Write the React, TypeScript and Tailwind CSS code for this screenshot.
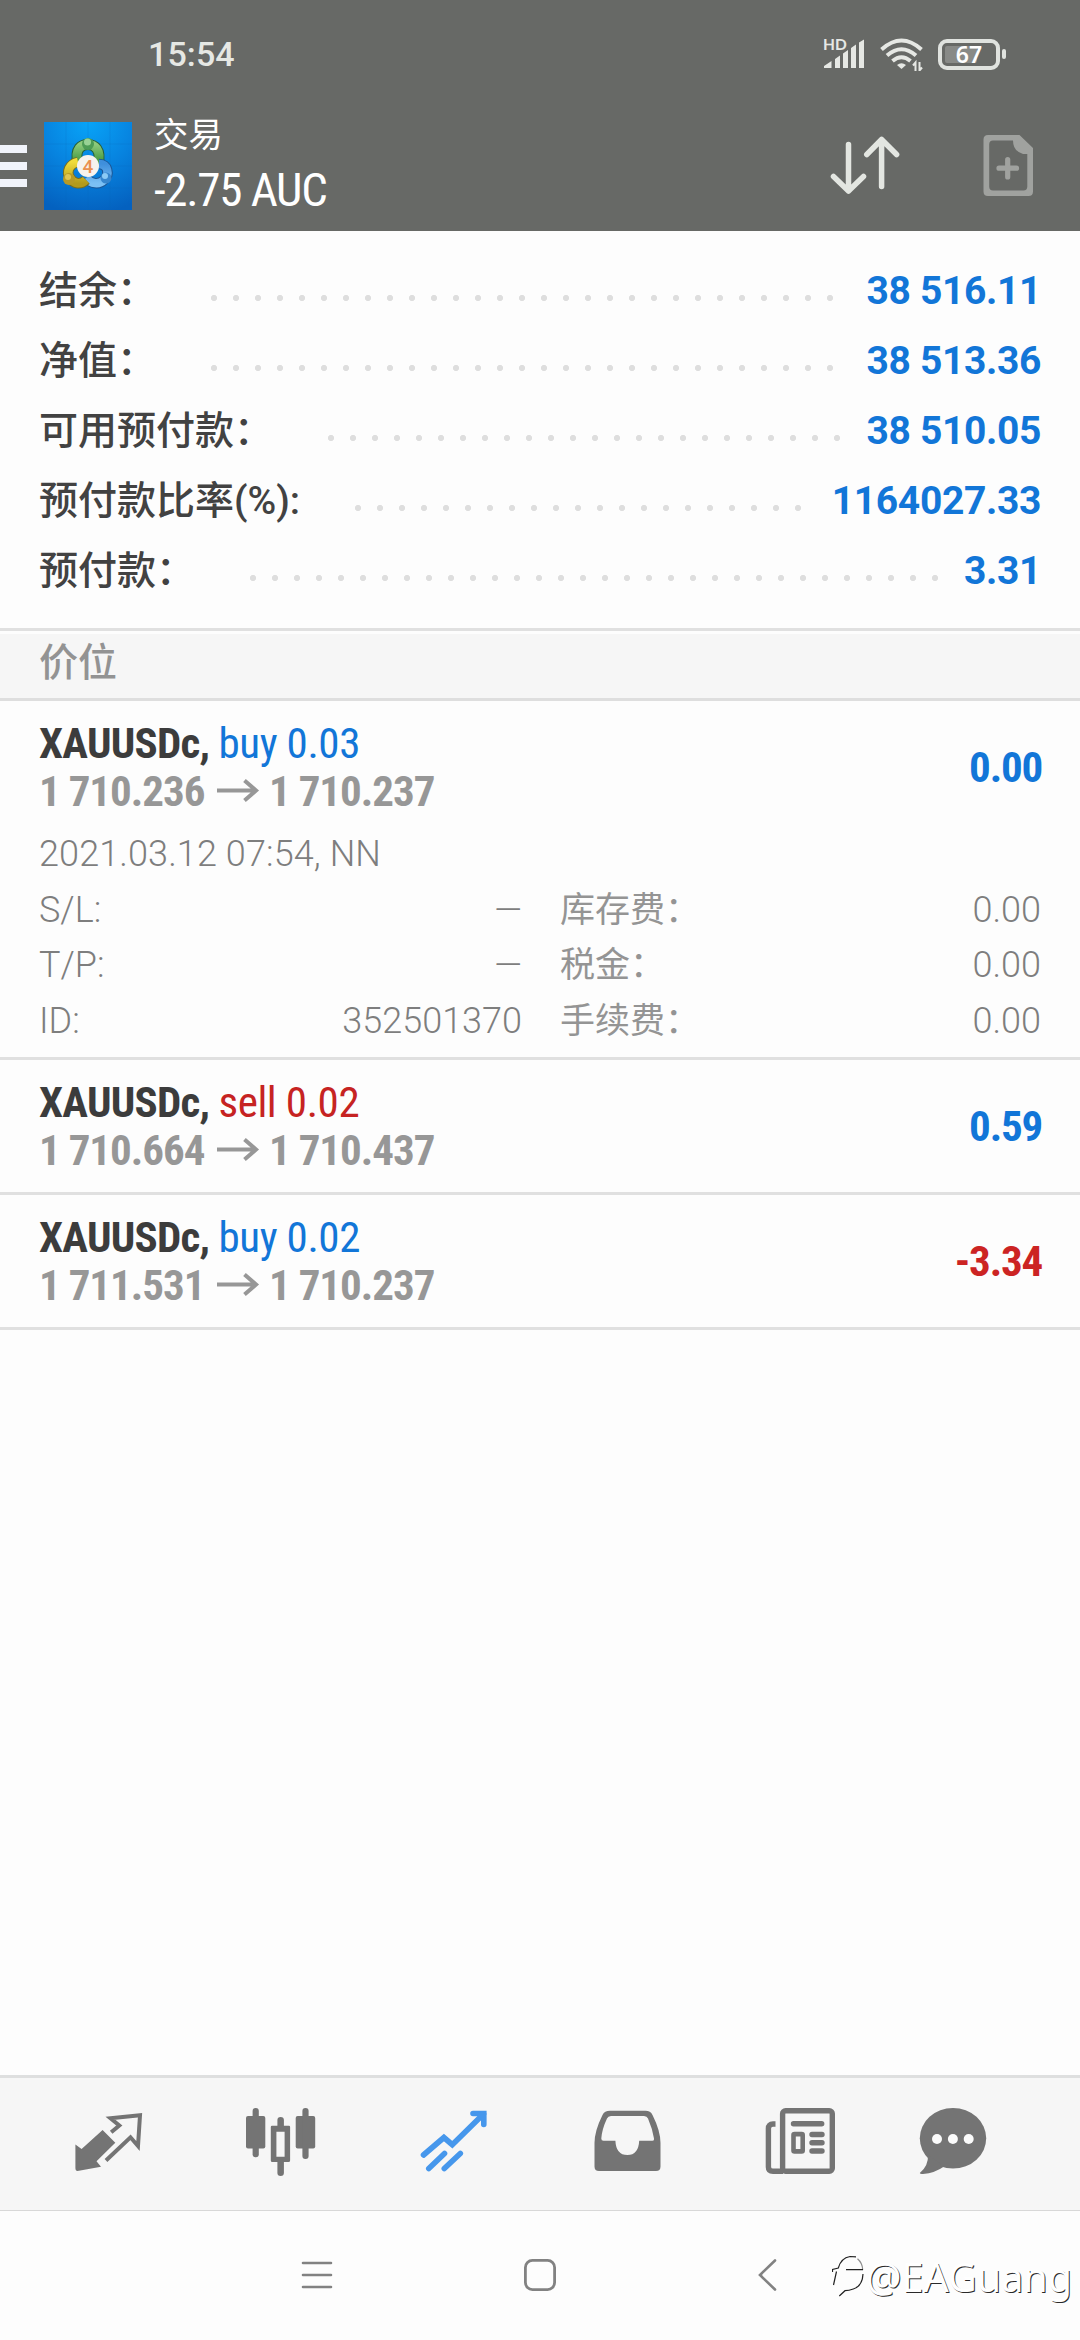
import React from 'react';

const accountRows = [
  { label: '结余：', value: '38 516.11' },
  { label: '净值：', value: '38 513.36' },
  { label: '可用预付款：', value: '38 510.05' },
  { label: '预付款比率(%):', value: '1164027.33' },
  { label: '预付款：', value: '3.31' },
];

const positions = [
  {
    id: 1, symbol: 'XAUUSDc,', side: 'buy', volume: '0.03', open: '1 710.236', current: '1 710.237', profit: '0.00',
    details: {
      date: '2021.03.12 07:54, NN',
      rows: [
        ['S/L:', '—', '库存费：', '0.00'],
        ['T/P:', '—', '税金：', '0.00'],
        ['ID:', '352501370', '手续费：', '0.00'],
      ],
    },
  },
  { id: 2, symbol: 'XAUUSDc,', side: 'sell', volume: '0.02', open: '1 710.664', current: '1 710.437', profit: '0.59' },
  { id: 3, symbol: 'XAUUSDc,', side: 'buy', volume: '0.02', open: '1 711.531', current: '1 710.237', profit: '-3.34' },
];

function StatusBar() {
  return (
    <div className="flex h-[100px] items-center pt-[8px] pl-[148px] pr-[74px] text-[#e6e8e4]">
      <span className="font-['Roboto'] text-[34px] font-medium leading-none tracking-[0.1px]">15:54</span>
      <div className="ml-auto flex items-center">
        <svg width="44" height="50" viewBox="0 -8 44 50" fill="currentColor">
          <text x="1" y="12.500" fontSize="15.500" fontFamily="Lato" fontWeight="700">HD</text>
          <path d="M2 31 V29 L9.5 24 V31 Z M13 31 V22 L18 18.5 V31 Z M21 31 V16.5 L26 13 V31 Z M29 31 V11 L34 7.5 V31 Z M37 31 V5.5 L42 2.5 V31 Z" />
        </svg>
        <svg className="ml-[14px]" width="44" height="34" viewBox="0 0 44 34" fill="none" stroke="currentColor" strokeWidth="4">
          <path d="M1.5 12.5 Q21.500 -5.500 41.500 12.500" />
          <path d="M7 18.500 Q21.500 6 36 18.500" />
          <path d="M12.500 24 Q21.500 16.500 30.500 24" />
          <path d="M17 28 Q21.500 24.500 26 28 L21.500 32 Z" fill="currentColor" stroke="none" />
          <path d="M35.500 34 V25.500 L33 28.500 M39.500 25 V33.500 L42 30.500" strokeWidth="2" />
        </svg>
        <div className="relative ml-[14px] flex h-[31px] w-[62px] items-center justify-center rounded-[9px] border-[4px] border-[#e0e3df]">
          <div className="absolute left-[3px] top-[3px] h-[17px] w-[32px] rounded-[2px] bg-[#888a87]" />
          <span className="relative font-['Noto_Sans'] text-[23px] font-semibold leading-none text-white">67</span>
        </div>
        <div className="ml-[2px] h-[10px] w-[4px] rounded-[2px] bg-[#e0e3df]" />
      </div>
    </div>
  );
}

function AppLogo() {
  return (
    <svg className="ml-[17px]" width="88" height="88" viewBox="0 0 88 88">
      <defs>
        <radialGradient id="logoBg" cx="0.5" cy="0" r="1.05">
          <stop offset="0" stopColor="#08a4f8" />
          <stop offset="0.5" stopColor="#0783df" />
          <stop offset="1" stopColor="#0461bf" />
        </radialGradient>
        <linearGradient id="green" x1="0" y1="0" x2="0" y2="1">
          <stop offset="0" stopColor="#8cc97a" />
          <stop offset="1" stopColor="#358f35" />
        </linearGradient>
        <linearGradient id="gold" x1="0" y1="0" x2="0" y2="1">
          <stop offset="0" stopColor="#f0dc3a" />
          <stop offset="1" stopColor="#b39a1c" />
        </linearGradient>
        <linearGradient id="sky" x1="0" y1="0" x2="0" y2="1">
          <stop offset="0" stopColor="#3f8fdc" />
          <stop offset="1" stopColor="#7cc0f4" />
        </linearGradient>
      </defs>
      <rect width="88" height="88" fill="url(#logoBg)" />
      <path d="M0 22H88M0 44H88M0 66H88M22 0V88M44 0V88M66 0V88" stroke="#0a62b8" strokeOpacity="0.2" />
      <path d="M34 42 C30 26 38 22.500 44 22.500 C50 22.500 58 27 54 43" fill="none" stroke="#285f35" strokeWidth="11" />
      <path d="M34 42 C30 26 38 22.500 44 22.500 C50 22.500 58 27 54 43" fill="none" stroke="url(#green)" strokeWidth="9" />
      <path d="M55 42 C64 42 66 52 60 58 C55 63 47 62 42 56" fill="none" stroke="#1b5695" strokeWidth="10.500" />
      <path d="M55 42 C64 42 66 52 60 58 C55 63 47 62 42 56" fill="none" stroke="url(#sky)" strokeWidth="8.500" />
      <path d="M34 40 C25 42 22 50 26 56 C30 62.500 37 63 42 58" fill="none" stroke="#776d20" strokeWidth="10.500" />
      <path d="M34 40 C25 42 22 50 26 56 C30 62.500 37 63 42 58" fill="none" stroke="url(#gold)" strokeWidth="8.500" />
      <circle cx="44" cy="22" r="6" fill="#4d9c55" />
      <circle cx="43.500" cy="20" r="3.500" fill="#98d294" />
      <circle cx="25" cy="57" r="6" fill="#b79a25" />
      <circle cx="24" cy="55" r="3" fill="#dfc552" />
      <circle cx="62" cy="56" r="5.500" fill="#3686ce" />
      <circle cx="61" cy="54" r="3" fill="#8bcaf5" />
      <circle cx="44" cy="44" r="11" fill="#f6f3ee" />
      <text x="44" y="51" textAnchor="middle" fontFamily="Roboto" fontSize="19" fontWeight="500" fill="#ea9150">4</text>
    </svg>
  );
}

function TopBar() {
  return (
    <div className="flex h-[131px] items-center">
      <div className="flex w-[27px] flex-col gap-[9px]">
        <span className="h-[8px] bg-[#f1f4fb]" />
        <span className="h-[8px] bg-[#f1f4fb]" />
        <span className="h-[8px] bg-[#f1f4fb]" />
      </div>
      <AppLogo />
      <div className="ml-[22px] text-white">
        <div className="font-['Roboto','Noto_Sans_CJK_SC',sans-serif] text-[34.5px] leading-[48px]">交易</div>
        <div className="font-['Roboto_Condensed','Roboto',sans-serif] text-[47px] leading-[62px] tracking-[-1.3px] [font-stretch:75%]">-2.75 AUC</div>
      </div>
      <svg className="ml-auto" width="74" height="68" viewBox="0 0 74 68" fill="none" stroke="#e3e6e1" strokeWidth="5.500" strokeLinecap="round" strokeLinejoin="round">
        <path d="M20.500 12.500V59M5.500 44.500L20.500 59L35.500 44.500" />
        <path d="M53.600 54.500V7.500M38.800 22.500L53.600 7.500L68.600 22.500" />
      </svg>
      <svg className="ml-[78px] mr-[40px]" width="60" height="70" viewBox="0 0 60 70" fill="#a0a29f">
        <path fillRule="evenodd" d="M8 4H39.500L53 17V60.500Q53 65 48.500 65H8Q3.500 65 3.500 60.500V8.500Q3.500 4 8 4ZM13 9.500Q9.200 9.500 9.200 13.500V55.500Q9.200 59.500 13 59.500H43.500Q47.300 59.500 47.300 55.500V23H43Q33 20 33 9.500Z" />
        <path d="M27.700 28.500V46M19 37.200H36.500" stroke="#a0a29f" strokeWidth="5.200" strokeLinecap="round" />
      </svg>
    </div>
  );
}

function PositionItem({ item }: { item: any }) {
  const isBuy = item.side === 'buy';
  return (
    <div className="border-b-[3px] border-[#e0e0e0] pl-[39px] pr-[39px]">
      <div className="flex h-[132px] items-center justify-between font-['Roboto_Condensed','Roboto',sans-serif] text-[43px] leading-[48px] [font-stretch:75%]">
        <div>
          <div className="text-[#3c3c3c]">
            <span className="font-bold tracking-[-0.75px]">{item.symbol} </span>
            <span className={`tracking-[-0.4px] ${isBuy ? 'text-[#1276d8]' : 'text-[#c62322]'}`}>{item.side} {item.volume}</span>
          </div>
          <div className="flex items-center font-bold tracking-[-1px] text-[#979797]">
            <span className="w-[177px]">{item.open}</span>
            <svg className="mr-[9px]" width="44" height="24" viewBox="0 0 44 24" fill="none" stroke="currentColor" strokeWidth="4">
              <path d="M1 11.500H40M28.500 1.500L40 11.500L28.500 21.500" />
            </svg>
            <span>{item.current}</span>
          </div>
        </div>
        <span className={`mr-[-1px] font-bold tracking-[-1.2px] ${item.profit.startsWith('-') ? 'text-[#cc2423]' : 'text-[#1276d8]'}`}>{item.profit}</span>
      </div>
      {item.details && (
        <div className="-mt-[6px] pb-[8px] font-['Roboto','Noto_Sans_CJK_SC',sans-serif] text-[36px] font-[350] leading-[55.5px] text-[#7e7e7e]">
          <div className="tracking-[0.1px]">{item.details.date}</div>
          {item.details.rows.map((row: string[]) => (
            <div key={row[0]} className="flex">
              <span>{row[0]}</span>
              <span className="ml-auto">{row[1]}</span>
              <span className="ml-[38px] w-[200px] text-[35px] font-normal text-[#949494]">{row[2]}</span>
              <span className="w-[281px] text-right">{row[3]}</span>
            </div>
          ))}
        </div>
      )}
    </div>
  );
}

function TabBar() {
  return (
    <div className="flex h-[136px] items-center gap-[97.3px] border-b border-t-[3px] border-b-[#d8d8d8] border-t-[#dedfdf] bg-[#f6f6f6] pl-[70px] text-[#747474]">
      {/* quotes */}
      <svg className="shrink-0" width="76" height="76" viewBox="0 0 76 76" fill="none" stroke="currentColor">
        <path d="M5.400 38.500L11.600 43L32.600 24L45.300 36.700L26.500 55.300L31 60.700L7.500 65Q5.400 65 5.400 62Z" fill="currentColor" stroke="none" />
        <path d="M41.200 26.300L49.300 19.500L40.500 12.300L70 9.300L68 40L60.500 31.300L36 54.500" strokeWidth="4" />
      </svg>
      {/* chart */}
      <svg className="shrink-0" width="76" height="76" viewBox="0 0 76 76" fill="currentColor">
        <rect x="3" y="10" width="19.300" height="32.600" rx="2" />
        <rect x="9.600" y="2" width="6.200" height="49.300" rx="3" />
        <path fillRule="evenodd" d="M29 19.700H46Q47.100 19.700 47.100 21V54.500Q47.100 56 45.500 56H29.300Q27.800 56 27.800 54.500V21Q27.800 19.700 29 19.700ZM33.400 25.700V50.700H41.600V25.700Z" />
        <path d="M34.400 20V14Q34.400 11 37.600 11Q40.900 11 40.900 14V20ZM34.400 55V67Q34.400 70 37.600 70Q40.900 70 40.900 67V55Z" />
        <rect x="52.700" y="10" width="19.500" height="32.600" rx="2" />
        <rect x="59.400" y="2" width="6.200" height="51" rx="3" />
      </svg>
      {/* trade */}
      <svg className="shrink-0 text-[#4697ec]" width="76" height="76" viewBox="0 0 76 76" fill="none" stroke="currentColor" strokeWidth="5.600" strokeLinecap="round">
        <path d="M6.500 49L26.900 31.500L35.300 38.700L66.500 8" />
        <path d="M56 7.500H66.800V18.500" />
        <path d="M56 6L68 6.500L67.500 17Z" fill="currentColor" stroke="none" />
        <path d="M11.800 62.500L27.500 47.500M27.300 62.500L43.300 47.500" />
      </svg>
      {/* history */}
      <svg className="shrink-0" width="76" height="76" viewBox="0 0 76 76" fill="currentColor">
        <path fillRule="evenodd" d="M20 4.800H55.500Q60.500 4.800 62.500 9Q70.500 25 70.500 37V60.500Q70.500 65 66 65H9Q4.500 65 4.500 60.500V37Q4.500 25 12.500 9Q14.500 4.800 20 4.800ZM21 10Q18 10 17 12.500Q12 23 11.300 32.500Q11.200 34.700 13.500 34.700H25.400Q26 49 37.400 49Q48.500 49 49.200 34.700H62.500Q64.500 34.700 64 32.500Q62.500 23 58 12.500Q57 10 54 10Z" />
      </svg>
      {/* news */}
      <svg className="shrink-0" width="76" height="76" viewBox="0 0 76 76" fill="none" stroke="currentColor" strokeWidth="5.400">
        <rect x="19.600" y="4.700" width="49.700" height="60.600" rx="3" />
        <path d="M12.500 18H10Q5.400 18 5.400 22.500V61Q5.400 65.300 10 65.300H20" />
        <path d="M30.500 17.700H58.700M49 28.500H59M49 36.800H59M49 45H59" strokeLinecap="round" />
        <rect x="30.500" y="28.100" width="9.200" height="17.300" rx="1" strokeWidth="4.600" />
      </svg>
      {/* messages */}
      <svg className="-ml-[21px] shrink-0" width="76" height="76" viewBox="0 0 76 76" fill="currentColor">
        <ellipse cx="38" cy="32.300" rx="33.200" ry="30.300" />
        <path d="M13 49Q13.500 60 4.800 67Q5 68.300 8 68Q20 67 29 60.500Z" />
        <g fill="#fbfbfb">
          <circle cx="22" cy="33" r="5" />
          <circle cx="37.900" cy="33" r="5" />
          <circle cx="53.700" cy="33" r="5" />
        </g>
      </svg>
    </div>
  );
}

function NavBar() {
  return (
    <div className="relative flex h-[129px] items-center pb-[1px] text-[#828282]">
      <svg className="ml-[300px]" width="34" height="34" viewBox="0 0 34 34" stroke="currentColor" strokeWidth="2.600" strokeLinecap="round">
        <path d="M3 5H31M3 17H31M3 29H31" />
      </svg>
      <svg className="ml-[189px]" width="34" height="34" viewBox="0 0 34 34" fill="none" stroke="currentColor" strokeWidth="2.800">
        <rect x="2.400" y="2.400" width="29.200" height="29.200" rx="7" />
      </svg>
      <svg className="ml-[199px]" width="24" height="34" viewBox="0 0 24 34" fill="none" stroke="currentColor" strokeWidth="2.600" strokeLinecap="round">
        <path d="M19 2.500L4 17L19 31.500" />
      </svg>
      {/* author stamp over the corner */}
      <div className="absolute right-[8px] top-[40px] flex items-center text-white">
        <svg className="mb-[1px]" width="34" height="44" viewBox="0 0 34 44" fill="none" stroke="#222" strokeWidth="1.200">
          <path d="M0.500 17V14.500L6.300 13Q9 3 18 1.500L24 1.800M4.500 16.500L1.500 30M14 14.700H31M31 19Q30.500 31 21.300 34Q17 35.500 13 35.700L7.300 41" />
          <path d="M25.500 3.700Q30.500 8 30.700 14.700" strokeOpacity="0.5" />
        </svg>
        <span className="font-['Noto_Sans'] text-[39.5px] leading-[52px] [text-shadow:1px_1px_0_#2a2a2a]">@EAGuang</span>
      </div>
    </div>
  );
}

export default function App() {
  return (
    <div className="flex h-[2340px] w-[1080px] flex-col overflow-hidden bg-[#fdfdfd]">
      <header className="h-[231px] shrink-0 bg-[#676966]">
        <StatusBar />
        <TopBar />
      </header>

      <section className="border-b-[3px] border-[#e0e0e0] pb-[22px] pl-[39px] pr-[39px] pt-[25px] font-['Roboto','Noto_Sans_CJK_SC',sans-serif] text-[39px] font-medium leading-[70px]">
        {accountRows.map((row) => (
          <div key={row.label} className="flex h-[70px] items-center">
            <span className="text-[#424242]">{row.label}</span>
            <span className="ml-[54.5px] mr-[19px] mt-[13px] h-[6px] flex-1 bg-[radial-gradient(circle_at_3px_3px,#dedede_2.8px,transparent_3.3px)] bg-[length:22px_6px]" />
            <span className="font-bold tracking-[-0.35px] text-[#1276d8]">{row.value}</span>
          </div>
        ))}
      </section>

      <div className="mt-[3px] h-[67px] border-b-[3px] border-[#dedede] bg-[#f6f6f6] pl-[39px] font-['Roboto','Noto_Sans_CJK_SC',sans-serif] text-[39px] font-medium leading-[59px] text-[#939393]">价位</div>

      <main className="flex-1">
        {positions.map((p) => <PositionItem key={p.id} item={p} />)}
      </main>

      <TabBar />
      <NavBar />
    </div>
  );
}
